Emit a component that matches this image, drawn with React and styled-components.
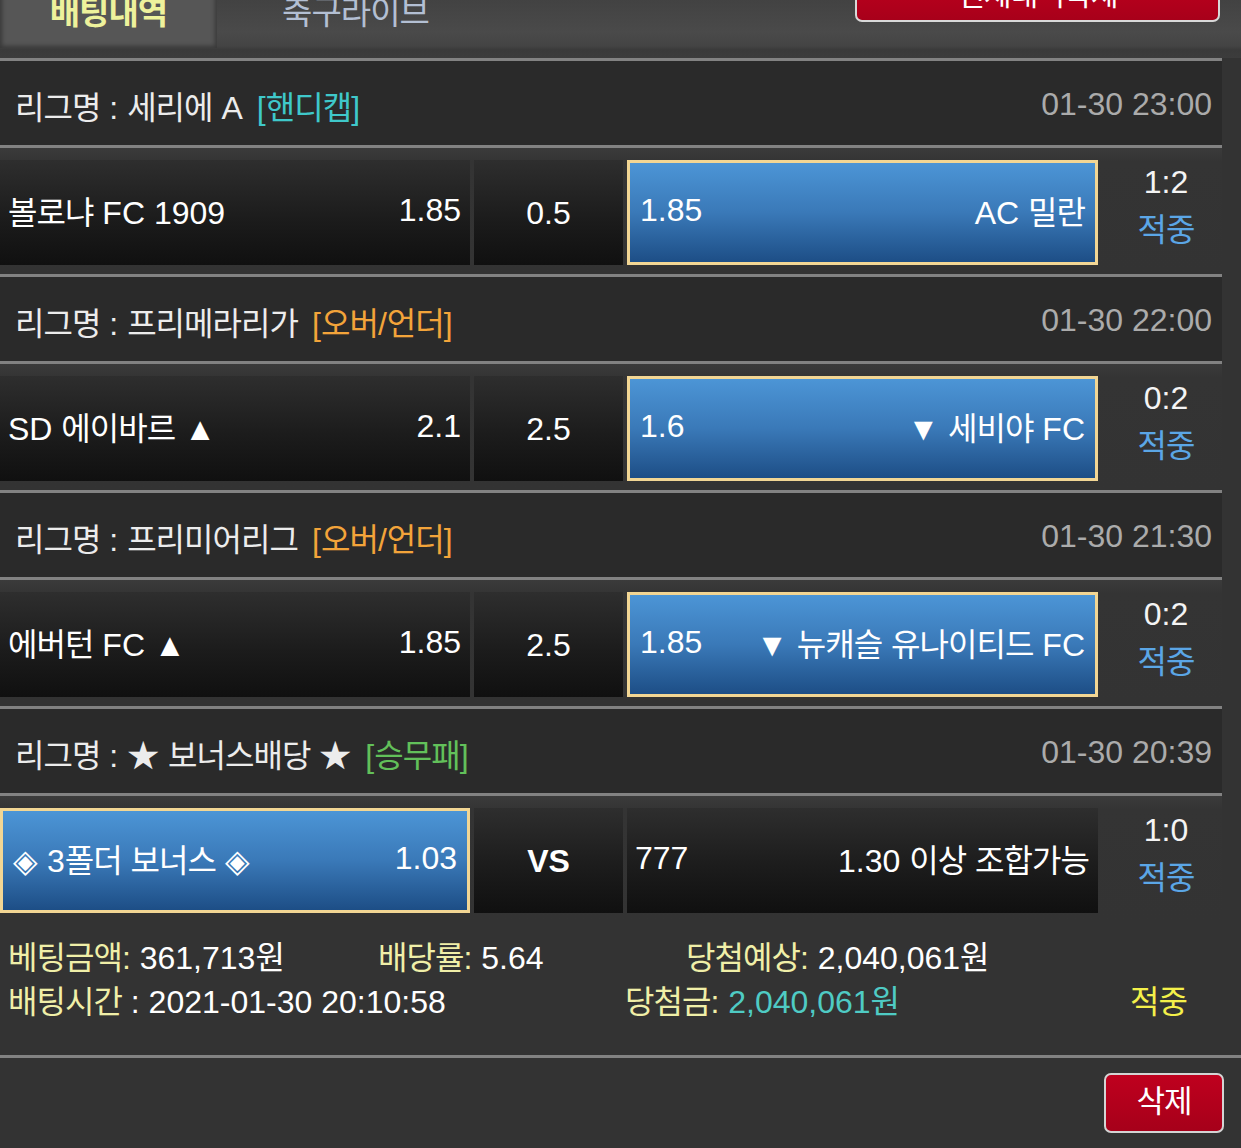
import React from "react";
import styled, { createGlobalStyle } from "styled-components";

const Global = createGlobalStyle`
  html, body { margin: 0; padding: 0; background: #333333; }
  body {
    font-family: "Liberation Sans", Arial, "Noto Sans CJK KR", sans-serif;
    font-size: 32px;
    color: #f2f2f2;
    overflow: hidden;
  }
  * { box-sizing: border-box; }
`;

const Page = styled.div`
  width: 1241px;
  margin-top: -30px;
  display: flex;
  flex-direction: column;
`;

const Ko = styled.span`
  font-size: 1em;
  letter-spacing: -0.03em;
`;

const HANGUL = /([\u1100-\u11FF\u3130-\u318F\uAC00-\uD7AF]+)/;
function T({ children }) {
  const parts = String(children).split(HANGUL);
  return parts.map((p, i) => (i % 2 ? <Ko key={i}>{p}</Ko> : p));
}

const TopBar = styled.div`
  height: 88px;
  display: flex;
  align-items: flex-start;
  background: linear-gradient(to bottom, #3b3b3b 0px, #4a4a4a 62px, #444 76px, #3a3a3a 80px, #3c3c3c 88px);
`;

const Tab = styled.div`
  width: ${(p) => p.$w}px;
  height: 78px;
  padding-top: 23px;
  line-height: 40px;
  text-align: center;
  font-size: 33px;
  font-weight: ${(p) => (p.$active ? 700 : 400)};
  color: ${(p) => (p.$active ? "#eef29c" : "#b3bfd3")};
  background: ${(p) => (p.$active ? "#565656" : "transparent")};
  box-shadow: ${(p) =>
    p.$active ? "inset 0 0 4px 2px rgba(0,0,0,0.35)" : "none"};
`;

const TopButton = styled.div`
  margin-left: auto;
  margin-right: 21px;
  margin-top: 2px;
  width: 365px;
  height: 50px;
  border: 2px solid #d8d8d8;
  border-radius: 7px;
  background: linear-gradient(to bottom, #c0001e, #a8001a);
  color: #fff;
  font-size: 30px;
  line-height: 42px;
  text-align: center;
`;

const List = styled.div`
  width: 1222px;
  display: flex;
  flex-direction: column;
`;

const Line = styled.div`
  height: 3px;
  background: #828282;
  width: ${(p) => (p.$full ? "1241px" : "100%")};
`;

const LeagueHeader = styled.div`
  height: 84px;
  background: #2a2a2a;
  display: flex;
  align-items: center;
  padding: 3px 10px 0 15px;
`;

const LeagueName = styled.span`
  color: #ececec;
`;

const Tag = styled.span`
  margin-left: 14px;
  color: ${(p) => p.$color};
`;

const Time = styled.span`
  margin-left: auto;
  color: #ababab;
`;

const MatchRow = styled.div`
  height: 126px;
  padding: 12px 0 9px 0;
  background: linear-gradient(to bottom, #3b3b3b 0px, #343434 14px, #333 100%);
  display: grid;
  grid-template-columns: 470px 149px 471px 1fr;
  column-gap: 4px;
`;

const Cell = styled.div`
  height: 105px;
  display: flex;
  align-items: center;
  justify-content: ${(p) => (p.$center ? "center" : "space-between")};
  padding: ${(p) =>
    p.$center ? "2px 0 0 0" : p.$sel ? "0 10px 5px 10px" : "0 9px 5px 8px"};
  border: ${(p) => (p.$sel ? "3px solid #f2d694" : "none")};
  background: ${(p) =>
    p.$sel
      ? "linear-gradient(to bottom, #4c95d6 0%, #3a79b8 50%, #1d4e86 100%)"
      : "linear-gradient(to bottom, #2e2e2e 0%, #1c1c1c 55%, #101010 100%)"};
  color: #ffffff;
  white-space: nowrap;
  font-weight: ${(p) => (p.$bold ? 700 : 400)};
`;

const ScoreCol = styled.div`
  display: flex;
  flex-direction: column;
  align-items: center;
  padding-left: 8px;
  line-height: 44px;
`;

const Score = styled.div`
  color: #f4f4f4;
`;

const Result = styled.div`
  margin-top: 4px;
  color: ${(p) => p.$color || "#5ba6e6"};
`;

const Summary = styled.div`
  height: 133px;
  padding: 14px 0 0 8px;
  display: flex;
  flex-direction: column;
  line-height: 44px;
`;

const SumRow = styled.div`
  display: flex;
  white-space: nowrap;
`;

const SumItem = styled.div`
  width: ${(p) => (p.$w ? `${p.$w}px` : "auto")};
`;

const Label = styled.span`
  color: #f0efa8;
`;

const Value = styled.span`
  color: ${(p) => (p.$teal ? "#4fcbc4" : "#ffffff")};
`;

const Win = styled.span`
  color: #f4f04a;
`;

const Footer = styled.div`
  height: 92px;
  display: flex;
  justify-content: flex-end;
  align-items: flex-start;
  padding: 15px 17px 0 0;
`;

const DeleteButton = styled.div`
  width: 120px;
  height: 60px;
  border: 2px solid #d4d4d4;
  border-radius: 7px;
  background: linear-gradient(to bottom, #bf001e, #a6001a);
  color: #fff;
  font-size: 31px;
  line-height: 54px;
  text-align: center;
`;

const matches = [
  {
    league: "리그명 : 세리에 A",
    tag: "[핸디캡]",
    tagColor: "#3fc8ca",
    time: "01-30 23:00",
    left: ["볼로냐 FC 1909", "1.85"],
    mid: "0.5",
    right: ["1.85", "AC 밀란"],
    pick: "right",
    score: "1:2",
  },
  {
    league: "리그명 : 프리메라리가",
    tag: "[오버/언더]",
    tagColor: "#f3a43a",
    time: "01-30 22:00",
    left: ["SD 에이바르 ▲", "2.1"],
    mid: "2.5",
    right: ["1.6", "▼ 세비야 FC"],
    pick: "right",
    score: "0:2",
  },
  {
    league: "리그명 : 프리미어리그",
    tag: "[오버/언더]",
    tagColor: "#f3a43a",
    time: "01-30 21:30",
    left: ["에버턴 FC ▲", "1.85"],
    mid: "2.5",
    right: ["1.85", "▼ 뉴캐슬 유나이티드 FC"],
    pick: "right",
    score: "0:2",
  },
  {
    league: "리그명 : ★ 보너스배당 ★",
    tag: "[승무패]",
    tagColor: "#62c05a",
    time: "01-30 20:39",
    left: ["◈ 3폴더 보너스 ◈", "1.03"],
    mid: "VS",
    midBold: true,
    right: ["777", "1.30 이상 조합가능"],
    pick: "left",
    score: "1:0",
  },
];

export default function App() {
  return (
    <>
      <Global />
      <Page>
        <TopBar>
          <Tab $active $w={217}>
            <T>배팅내역</T>
          </Tab>
          <Tab $w={277}>
            <T>축구라이브</T>
          </Tab>
          <TopButton>
            <T>전체내역삭제</T>
          </TopButton>
        </TopBar>
        <List>
          {matches.map((m, i) => (
            <React.Fragment key={i}>
              <Line />
              <LeagueHeader>
                <LeagueName>
                  <T>{m.league}</T>
                </LeagueName>
                <Tag $color={m.tagColor}>
                  <T>{m.tag}</T>
                </Tag>
                <Time>{m.time}</Time>
              </LeagueHeader>
              <Line />
              <MatchRow>
                <Cell $sel={m.pick === "left"}>
                  <span>
                    <T>{m.left[0]}</T>
                  </span>
                  <span>{m.left[1]}</span>
                </Cell>
                <Cell $center $bold={m.midBold}>
                  {m.mid}
                </Cell>
                <Cell $sel={m.pick === "right"}>
                  <span>{m.right[0]}</span>
                  <span>
                    <T>{m.right[1]}</T>
                  </span>
                </Cell>
                <ScoreCol>
                  <Score>{m.score}</Score>
                  <Result>
                    <T>적중</T>
                  </Result>
                </ScoreCol>
              </MatchRow>
            </React.Fragment>
          ))}
        </List>
        <Summary>
          <SumRow>
            <SumItem $w={370}>
              <Label>
                <T>베팅금액:</T>
              </Label>{" "}
              <Value>
                <T>361,713원</T>
              </Value>
            </SumItem>
            <SumItem $w={308}>
              <Label>
                <T>배당률:</T>
              </Label>{" "}
              <Value>5.64</Value>
            </SumItem>
            <SumItem>
              <Label>
                <T>당첨예상:</T>
              </Label>{" "}
              <Value>
                <T>2,040,061원</T>
              </Value>
            </SumItem>
          </SumRow>
          <SumRow>
            <SumItem $w={617}>
              <Label>
                <T>배팅시간</T>
              </Label>
              <Value> : 2021-01-30 20:10:58</Value>
            </SumItem>
            <SumItem $w={505}>
              <Label>
                <T>당첨금:</T>
              </Label>{" "}
              <Value $teal>
                <T>2,040,061원</T>
              </Value>
            </SumItem>
            <SumItem>
              <Win>
                <T>적중</T>
              </Win>
            </SumItem>
          </SumRow>
        </Summary>
        <Line $full />
        <Footer>
          <DeleteButton>
            <T>삭제</T>
          </DeleteButton>
        </Footer>
      </Page>
    </>
  );
}
